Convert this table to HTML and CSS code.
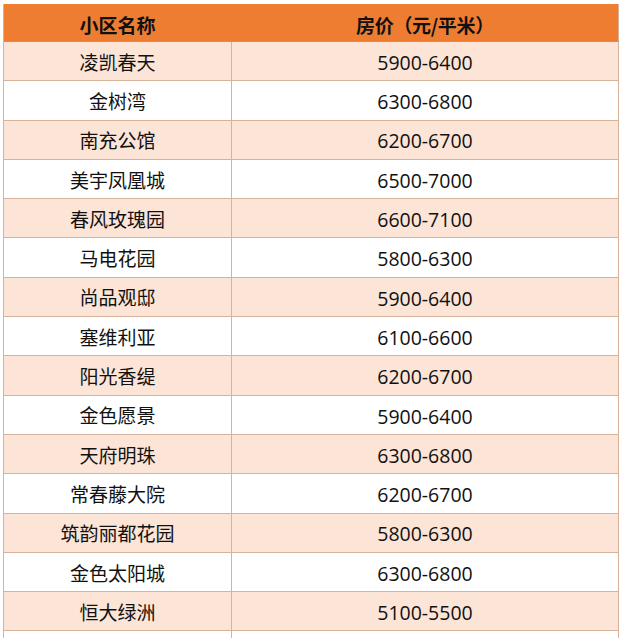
FILE: index.html
```html
<!DOCTYPE html>
<html lang="zh-CN">
<head>
<meta charset="utf-8">
<title>小区房价</title>
<link rel="stylesheet" href="styles.css">
</head>
<body>
<div class="sheet">
  <div class="row head"><div class="cell name">小区名称</div><div class="cell price">房价（元/平米）</div></div>
  <div class="row odd"><div class="cell name">凌凯春天</div><div class="cell price">5900-6400</div></div>
  <div class="row"><div class="cell name">金树湾</div><div class="cell price">6300-6800</div></div>
  <div class="row odd"><div class="cell name">南充公馆</div><div class="cell price">6200-6700</div></div>
  <div class="row"><div class="cell name">美宇凤凰城</div><div class="cell price">6500-7000</div></div>
  <div class="row odd"><div class="cell name">春风玫瑰园</div><div class="cell price">6600-7100</div></div>
  <div class="row"><div class="cell name">马电花园</div><div class="cell price">5800-6300</div></div>
  <div class="row odd"><div class="cell name">尚品观邸</div><div class="cell price">5900-6400</div></div>
  <div class="row"><div class="cell name">塞维利亚</div><div class="cell price">6100-6600</div></div>
  <div class="row odd"><div class="cell name">阳光香缇</div><div class="cell price">6200-6700</div></div>
  <div class="row"><div class="cell name">金色愿景</div><div class="cell price">5900-6400</div></div>
  <div class="row odd"><div class="cell name">天府明珠</div><div class="cell price">6300-6800</div></div>
  <div class="row"><div class="cell name">常春藤大院</div><div class="cell price">6200-6700</div></div>
  <div class="row odd"><div class="cell name">筑韵丽都花园</div><div class="cell price">5800-6300</div></div>
  <div class="row"><div class="cell name">金色太阳城</div><div class="cell price">6300-6800</div></div>
  <div class="row odd"><div class="cell name">恒大绿洲</div><div class="cell price">5100-5500</div></div>
  <div class="row"><div class="cell name"></div><div class="cell price"></div></div>
</div>
</body>
</html>
```
FILE: styles.css
```css
html, body {
  margin: 0;
  padding: 0;
  background: #ffffff;
}
body {
  font-family: "Open Sans", "Noto Sans CJK SC", sans-serif;
  color: #111111;
}
.sheet {
  margin: 4px 0 0 3px;
  width: 616px;
  box-sizing: border-box;
  border-left: 1px solid #d8b39b;
}
.row {
  display: flex;
  height: 39.3px;
  box-sizing: border-box;
  border-bottom: 1px solid #d8b39b;
  background: #ffffff;
}
.row.odd {
  background: #fce4d6;
}
.row.head {
  height: 38px;
  background: #ee7d31;
  border-bottom: 1px solid #c9906a;
  font-weight: 700;
}
.cell {
  display: flex;
  align-items: center;
  justify-content: center;
  box-sizing: border-box;
  border-right: 1px solid #d8b39b;
  font-size: 19px;
  line-height: 1;
}
.head .cell {
  border-right-color: #ee7d31;
  padding-top: 3px;
}
.head .cell.price {
  border-right-color: #d8b39b;
}
.name {
  width: 228px;
  font-family: "Noto Sans CJK SC", sans-serif;
}
.price {
  width: 387px;
  padding-top: 3px;
  font-family: "Open Sans", "Noto Sans CJK SC", sans-serif;
  font-size: 19.5px;
}
.head .price {
  font-family: "Noto Sans CJK SC", sans-serif;
  font-size: 19px;
  letter-spacing: -0.3px;
}
```
